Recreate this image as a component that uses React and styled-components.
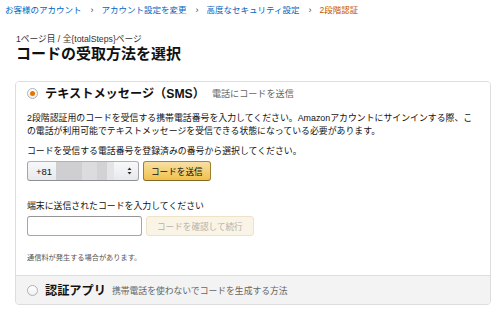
import React from 'react'
import styled, { createGlobalStyle } from 'styled-components'

const GlobalStyle = createGlobalStyle`
  html, body {
    margin: 0;
    padding: 0;
    background: #fff;
  }
  body {
    font-family: "Liberation Sans", "Noto Sans CJK JP", sans-serif;
    color: #111;
  }
`

function App() {
    return (
        <Page>
            <GlobalStyle />
            <Breadcrumb>
                <Crumb>お客様のアカウント</Crumb>
                <Sep>›</Sep>
                <Crumb>アカウント設定を変更</Crumb>
                <Sep>›</Sep>
                <Crumb>高度なセキュリティ設定</Crumb>
                <Sep>›</Sep>
                <Crumb current>2段階認証</Crumb>
            </Breadcrumb>
            <Heading>
                <StepText>1ページ目 / 全{'{totalSteps}'}ページ</StepText>
                <Title>コードの受取方法を選択</Title>
            </Heading>
            <OptionBox>
                <SmsSection>
                    <OptionHead>
                        <Radio checked />
                        <OptionName>テキストメッセージ（SMS）</OptionName>
                        <OptionHint size={9.1} gap={7}>電話にコードを送信</OptionHint>
                    </OptionHead>
                    <Desc>
                        2段階認証用のコードを受信する携帯電話番号を入力してください。Amazonアカウントにサインインする際、この電話が利用可能でテキストメッセージを受信できる状態になっている必要があります。
                    </Desc>
                    <Label gap={7}>コードを受信する電話番号を登録済みの番号から選択してください。</Label>
                    <FieldRow>
                        <PhoneSelect>
                            <span className="code">+81</span>
                            <Redacted />
                            <svg width="5" height="8" viewBox="0 0 5 8">
                                <path d="M2.5 0.5 L4.5 3 L0.5 3 Z M2.5 7.5 L4.5 5 L0.5 5 Z" fill="#333" />
                            </svg>
                        </PhoneSelect>
                        <PrimaryButton>コードを送信</PrimaryButton>
                    </FieldRow>
                    <Label gap={19}>端末に送信されたコードを入力してください</Label>
                    <FieldRow>
                        <CodeInput />
                        <PrimaryButton disabled>コードを確認して続行</PrimaryButton>
                    </FieldRow>
                    <Note>通信料が発生する場合があります。</Note>
                </SmsSection>
                <AppSection>
                    <Radio />
                    <OptionName>認証アプリ</OptionName>
                    <OptionHint size={8.8} gap={6}>携帯電話を使わないでコードを生成する方法</OptionHint>
                </AppSection>
            </OptionBox>
        </Page>
    )
}

export default App

const Page = styled.div`
    width: 500px;
    height: 315px;
    overflow: hidden;
`

const Breadcrumb = styled.div`
    display: flex;
    align-items: center;
    padding: 4px 5px 0;
    height: 12px;
    font-size: 8.5px;
    line-height: 12px;
`

const Crumb = styled.span`
    color: ${p => (p.current ? '#c45500' : '#0066c0')};
    white-space: nowrap;
`

const Sep = styled.span`
    color: #444;
    margin: 0 8px 0 9px;
    font-size: 9px;
`

const Heading = styled.div`
    padding: 17px 0 0 16px;
`

const StepText = styled.div`
    font-size: 8.7px;
    line-height: 12px;
    color: #333;
`

const Title = styled.h1`
    margin: 0;
    font-size: 15px;
    line-height: 18px;
    font-weight: 700;
    color: #111;
`

const OptionBox = styled.div`
    margin: 18px 9px 0 15px;
    border: 1px solid #ddd;
    border-radius: 4px;
    overflow: hidden;
`

const SmsSection = styled.div`
    background: #fff;
    padding: 0 11px 12px;
`

const OptionHead = styled.div`
    display: flex;
    align-items: center;
    height: 22px;
`

const Radio = styled.span`
    position: relative;
    flex: none;
    width: 11px;
    height: 11px;
    box-sizing: border-box;
    border-radius: 50%;
    border: 1px solid #adb1b8;
    background: linear-gradient(#fff, #eef0f2);
    margin-right: 7px;
    &::after {
        content: '';
        display: ${p => (p.checked ? 'block' : 'none')};
        position: absolute;
        left: 2px;
        top: 2px;
        width: 5px;
        height: 5px;
        border-radius: 50%;
        background: #e77600;
    }
`

const OptionName = styled.span`
    font-size: 12.2px;
    font-weight: 700;
    color: #111;
    white-space: nowrap;
`

const OptionHint = styled.span`
    font-size: ${p => p.size}px;
    margin-left: ${p => p.gap}px;
    color: #666;
    white-space: nowrap;
`

const Desc = styled.p`
    margin: 8px 0 0;
    font-size: 8.9px;
    line-height: 13px;
    color: #111;
`

const Label = styled.div`
    margin-top: ${p => p.gap}px;
    font-size: 8.9px;
    line-height: 13px;
    color: #111;
`

const FieldRow = styled.div`
    display: flex;
    align-items: center;
    gap: 4px;
    margin-top: 3px;
`

const PhoneSelect = styled.div`
    display: flex;
    align-items: center;
    box-sizing: border-box;
    width: 112px;
    height: 20px;
    padding: 0 6px 0 8px;
    border: 1px solid #adb1b8;
    border-color: #adb1b8 #a2a6ac #8d9096;
    border-radius: 3px;
    background: linear-gradient(#f7f8fa, #e7e9ec);
    font-size: 9.5px;
    color: #111;
    .code {
        width: 20px;
    }
    svg {
        margin-left: auto;
    }
`

// blurred-out phone number
const Redacted = styled.span`
    width: 58px;
    height: 18px;
    background: linear-gradient(90deg, #cfcfd1 0 44%, #dcdcde 44% 70%, #d2d2d4 70% 88%, #e4e4e6 88% 100%);
`

const PrimaryButton = styled.button`
    box-sizing: border-box;
    height: 20px;
    padding: 0 7px;
    border: 1px solid;
    border-radius: 3px;
    font-family: inherit;
    font-size: 8.6px;
    cursor: pointer;
    white-space: nowrap;
    border-color: #a88734 #9c7e31 #846a29;
    background: linear-gradient(#f7dfa5, #f0c14b);
    color: #111;
    &:disabled {
        border-color: #eee3c8;
        background: #faf4e6;
        color: #b8b2a6;
        padding: 0 10px;
        cursor: default;
    }
`

const CodeInput = styled.input`
    box-sizing: border-box;
    width: 115px;
    height: 20px;
    margin: 0;
    border: 1px solid #a6a6a6;
    border-top-color: #949494;
    border-radius: 3px;
    background: #fff;
`

const Note = styled.div`
    margin-top: 17px;
    font-size: 7.2px;
    line-height: 10px;
    color: #555;
`

const AppSection = styled.div`
    display: flex;
    align-items: center;
    height: 28px;
    padding: 0 11px;
    border-top: 1px solid #ddd;
    background: #f3f3f3;
`
